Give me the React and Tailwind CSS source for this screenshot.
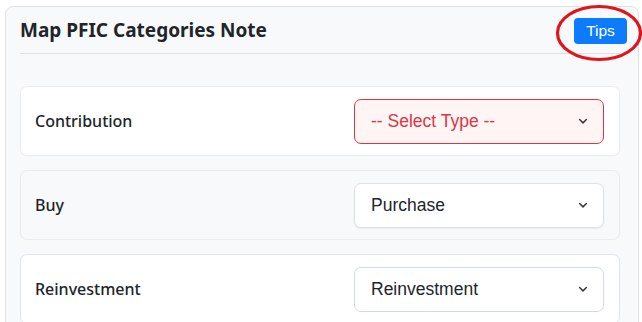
import React from "react";

function Chevron() {
  return (
    <svg width="12" height="12" viewBox="0 0 16 16" fill="none" className="shrink-0">
      <path d="M3.5 6l4.5 4.5L12.5 6" stroke="#343a40" strokeWidth="2" strokeLinecap="round" strokeLinejoin="round" />
    </svg>
  );
}

function Row({ label, value, variant }) {
  const rowCls =
    variant === "hover"
      ? "bg-[#f8f9fa] border-[#e9ecef]"
      : variant === "focus"
      ? "bg-white border-[#dbe5f3]"
      : "bg-white border-[#e9ecef]";
  const selCls =
    variant === "error"
      ? "border-[#dc3545] bg-[#fff5f5] text-[#dc3545]"
      : variant === "focus"
      ? "border-[#cfdbec] bg-white text-[#212529]"
      : "border-[#dee2e6] bg-white text-[#212529] shadow-[0_1px_2px_rgba(0,0,0,0.06)]";
  return (
    <div className={`h-[70px] rounded-[7px] border flex items-center justify-between pl-[14px] pr-[15px] ${rowCls}`}>
      <span className="text-[16px] font-medium text-[#212529] [font-family:'Noto_Sans',sans-serif]">{label}</span>
      <div className={`w-[250px] h-[45px] rounded-[7px] border flex items-center justify-between pl-[16px] pr-[14px] ${selCls}`}>
        <span className="text-[17.5px] [font-family:'Liberation_Sans',Arial,sans-serif]">{value}</span>
        <Chevron />
      </div>
    </div>
  );
}

export default function App() {
  return (
    <div className="w-[642px] h-[322px] bg-white overflow-hidden relative">
      <div className="ml-[5px] mt-[6px] w-[634px] h-[340px] rounded-[8px] border border-[#dee2e6] bg-[#f8f9fa] pl-[14px] pr-[18px]">
        <div className="flex items-center justify-between h-[47px] border-b border-[#dee2e6] pt-[1px]">
          <h1 className="text-[19px] font-bold text-[#212529] [font-family:'Noto_Sans',sans-serif]">
            Map PFIC Categories Note
          </h1>
          <button className="w-[53px] h-[26px] rounded-[4px] bg-[#0d7bfd] text-white text-[15.5px] [font-family:'Liberation_Sans',Arial,sans-serif] mr-[-7px]">
            Tips
          </button>
        </div>
        <div className="flex flex-col gap-[14px] pt-[32px]">
          <Row label="Contribution" value="-- Select Type --" variant="error" />
          <Row label="Buy" value="Purchase" variant="hover" />
          <Row label="Reinvestment" value="Reinvestment" variant="focus" />
        </div>
      </div>
      <svg className="absolute left-[555px] top-[4px] pointer-events-none" width="88" height="58" viewBox="0 0 88 58">
        <ellipse cx="44" cy="29" rx="41.5" ry="26.5" fill="none" stroke="#e0141b" strokeWidth="3.2" />
      </svg>
    </div>
  );
}
